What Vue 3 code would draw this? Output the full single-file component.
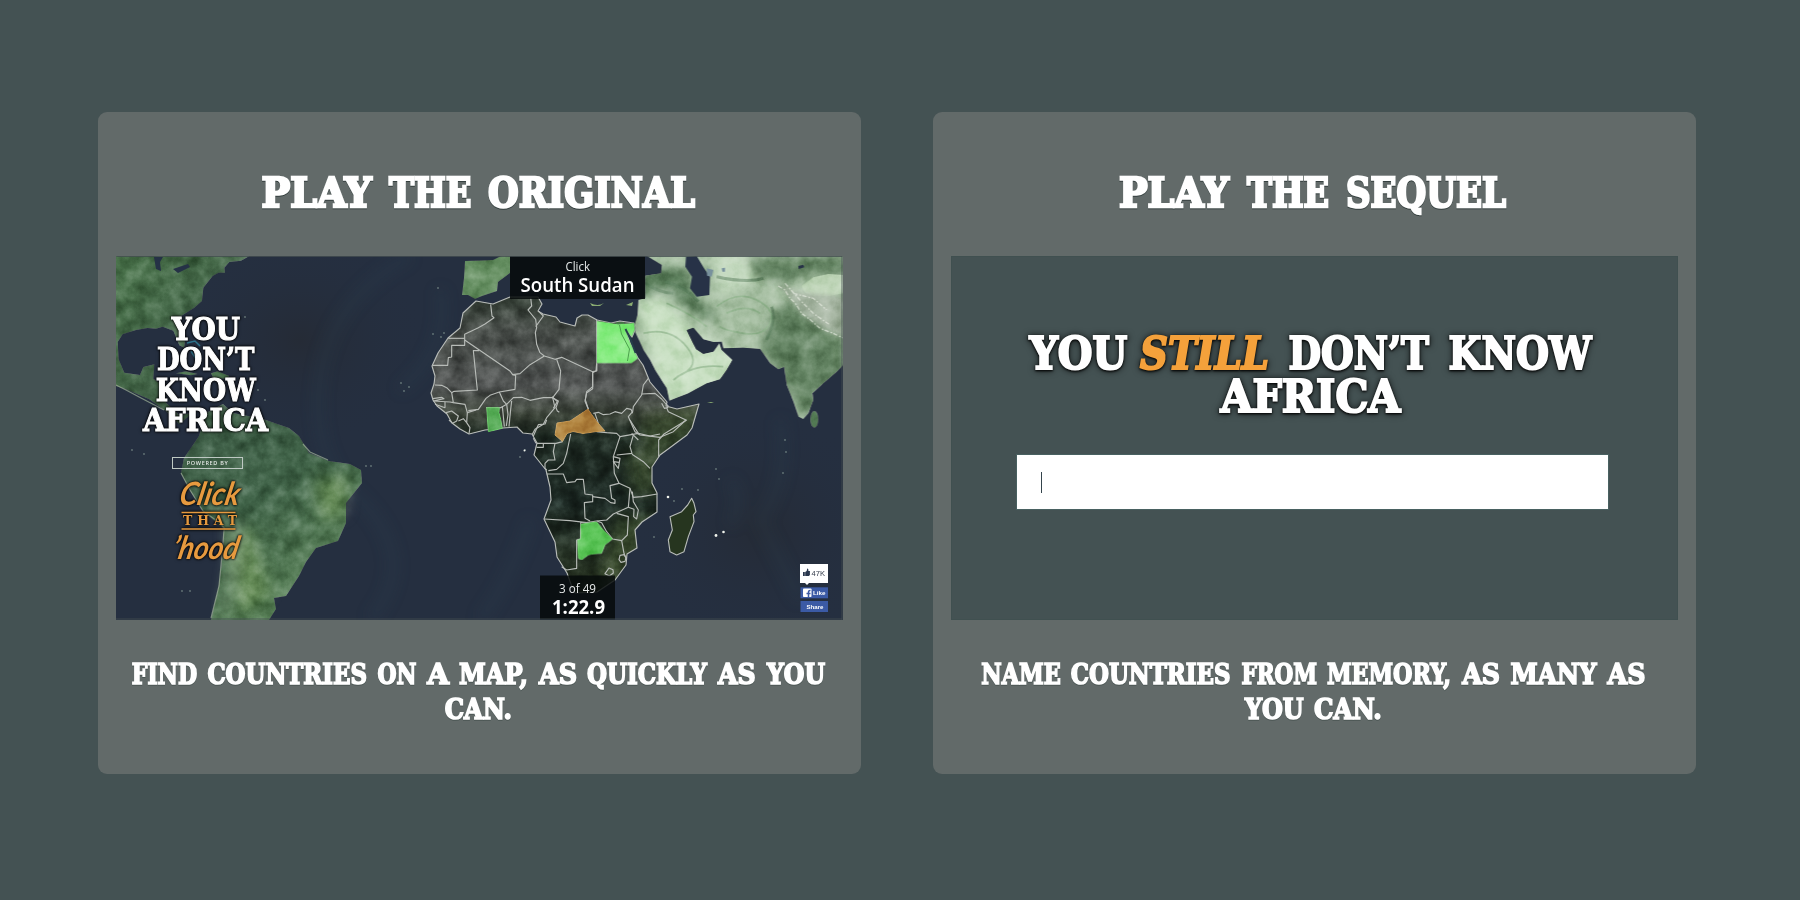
<script setup>
const cards = [
  {
    id: 'original',
    box: '116 112 727 144',
    foot: '116 620 727 154',
    title: [['PLAY', 261.6, 371.8], ['THE', 389, 471.5], ['ORIGINAL', 488, 695]],
    lines: [
      [['FIND', 131.8, 197], ['COUNTRIES', 207.4, 367], ['ON', 377.5, 416.4], ['A', 427.3, 449], ['MAP,', 459, 528], ['AS', 539, 577], ['QUICKLY', 587, 707], ['AS', 718, 755.6], ['YOU', 767, 825]],
      [['CAN.', 444.7, 512]],
    ],
  },
  {
    id: 'sequel',
    box: '951 112 727 144',
    foot: '951 620 727 154',
    title: [['PLAY', 1119, 1229], ['THE', 1247, 1329], ['SEQUEL', 1346, 1506]],
    lines: [
      [['NAME', 981.2, 1060.8], ['COUNTRIES', 1070.8, 1230.4], ['FROM', 1241.4, 1317], ['MEMORY,', 1327, 1451], ['AS', 1462.3, 1500], ['MANY', 1510.5, 1596.6], ['AS', 1607.6, 1645.4]],
      [['YOU', 1244.9, 1303.6], ['CAN.', 1314, 1381.7]],
    ],
  },
]
const captionWords = (c) => c.lines.flatMap((line, i) => line.map((w) => [...w, 683.5 + i * 35.5]))
const hero = [
  ['YOU', 1029.4, 1127.3, 369], ['STILL', 1140, 1269, 369], ['DON’T', 1288.6, 1429, 369],
  ['KNOW', 1448.6, 1591.4, 369], ['AFRICA', 1220.4, 1400.4, 411.5],
]
const logo = [
  ['YOU', 171.7, 240, 340], ['DON’T', 157, 254.5, 370.3],
  ['KNOW', 155.7, 255.7, 400.5], ['AFRICA', 143, 268, 430.5],
]
const africa = 'M476 301L463 313 460 328 448 338 438 353 432 366 435 376 434 384 431 393 433 400 437 406 447 414 452 423 460 429 469 434 485 430 503 428 517 427 523 433 532 434 537 443 534 455 546 470 550 487 551 500 544 519 555 542 557 557 567 573 572 587 575 593 597 592 615 580 626 565 627 554 637 548 635 530 642 522 657 512 657 493 652 483 652 467 660 455 687 435 692 428 699 404 677 409 666 406 667 402 650 382 643 365 638 358 630 343 625 328 632 337 635 330 634 323 620 321 611 323 597 320 588 315 582 315 577 318 575 326 560 322 556 317 543 314 538 311 542 304 538 297 510 297 493 304Z'
const west = [
  '362,145 366,180 372,185 345,204 325,215 284,235 284,268 245,268 245,303 235,305 233,328 187,328', '235,247 284,247',
  '284,252 350,297 420,345 428,356 450,353 480,326 523,300', '482,125 485,150 474,162 497,190 500,215 496,230 500,265 510,290 523,300', '497,212 507,198 520,180 505,165',
  '523,300 555,310 575,304 668,347 680,345 680,190', '328,284 310,284 322,402 252,406 245,410 230,395 215,388 195,387',
  '428,356 437,358 435,400 388,408 360,418 348,427 325,460 295,464', '388,408 400,435 410,445 430,425 455,424 480,433 520,425 548,425 567,400 572,345 560,310',
  '425,435 422,460 417,512', '668,347 668,398 650,410 645,435 655,460', '548,425 555,455 530,485 520,505 495,520 487,535',
  '548,425 565,435 558,455 562,465 568,469', '188,428 215,424 222,428 190,435 240,438 250,440 245,410', '195,445 225,455 225,438',
  '250,440 285,445 292,470 290,500 300,515 297,533', '228,470 245,465 265,480 260,495 248,502 237,492', '265,495 280,488 290,500', '292,470 318,462',
  '348,455 392,455 410,445', '397,450 403,512', '410,445 414,475 409,510', '680,345 680,322',
]
const east = [
  '200,340 198,362 188,368 188,410 170,425 166,450 175,477', '335,435 340,405 355,385', '335,435 310,470 308,485 295,500 315,545 330,555 390,562 430,545 468,510 415,485 410,473',
  '190,490 205,487 220,494 240,492 255,485 275,490 290,475 303,478 308,490', '195,490 205,520', '335,432 375,430 395,447 408,462 415,468', '395,460 403,475 415,472',
  '66,440 82,455 70,475', '305,550 325,570',
]
const south = [
  '350,70 408,70 428,65', '350,82 370,82 370,70', '405,70 400,95 405,120 385,120 375,130 375,145 380,150', '452,42 440,100 430,130 410,148 385,152',
  '380,162 430,162 440,188 465,185 470,178 490,178 495,222 518,225 518,245 493,248 495,295 510,303', '373,297 450,302 500,308 530,303 560,300 580,282 595,275 625,262',
  '600,50 590,80 580,110 583,160 597,190 570,197 575,235 585,240 585,250 572,248 555,235 518,230', '597,190 630,205 640,232 665,230 712,222', '630,205 625,262 642,268 641,290 650,297 655,270 640,245 637,215',
  '530,303 545,308 560,335 578,357 605,362 622,345 625,290 590,280', '605,362 612,400 620,420', '500,308 482,308 482,357 470,360 470,445 440,450 425,440',
  '640,45 630,80 636,100 590,105', '636,103 670,125 690,145', '530,35 560,38 590,40 600,50 655,40 690,48 720,42', '716,110 716,60 732,42 800,0', '580,110 600,115 595,145 580,125 597,127',
  '630,0 655,40', '380,0 375,12 355,14 340,48', '340,55 348,70',
]
const specks = [[132, 450], [144, 454], [438, 288], [433, 334], [441, 337], [444, 333], [401, 383], [409, 387], [404, 391], [525, 450], [520, 457], [668, 497], [674, 501], [682, 489], [698, 490], [654, 537], [716, 469], [719, 479], [785, 440], [786, 452], [783, 473], [366, 466], [371, 466], [182, 591], [190, 591], [265, 400], [258, 390], [245, 317]]
</script>

<template>
  <main class="page">
    <article v-for="c in cards" :key="c.id" class="card">
      <h2 class="title">
        <svg :viewBox="c.box" width="727" height="144">
          <text v-for="w in c.title" :key="w[1]" class="slab title-text" :x="w[1]" y="206.5" :textLength="w[2] - w[1]" lengthAdjust="spacingAndGlyphs">{{ w[0] }}</text>
        </svg>
      </h2>

      <div v-if="c.id === 'original'" class="media">
        <svg viewBox="116 256 727 364" width="727" height="364">
          <defs>
            <linearGradient id="sahara" x1="0" y1="0" x2="0" y2="1">
              <stop offset="0" stop-color="#39443a" /><stop offset=".12" stop-color="#4b504c" /><stop offset=".3" stop-color="#545756" />
              <stop offset=".4" stop-color="#3b4338" /><stop offset=".47" stop-color="#1f2b23" /><stop offset=".7" stop-color="#1b2722" /><stop offset="1" stop-color="#2b3724" />
            </linearGradient>
            <linearGradient id="namerica" x1="0" y1="0" x2="1" y2="1"><stop offset="0" stop-color="#4c754d" /><stop offset="1" stop-color="#3d5845" /></linearGradient>
            <linearGradient id="samerica" x1="0" y1="0" x2=".6" y2="1"><stop offset="0" stop-color="#41604a" /><stop offset=".5" stop-color="#416449" /><stop offset="1" stop-color="#5e865c" /></linearGradient>
            <radialGradient id="sea"><stop offset="0" stop-color="#252b36" /><stop offset="1" stop-color="#252f40" stop-opacity="0" /></radialGradient>
            <filter id="soft" x="-40%" y="-40%" width="180%" height="180%"><feGaussianBlur stdDeviation="7" /></filter>
            <filter id="wash" x="-40%" y="-40%" width="180%" height="180%"><feGaussianBlur stdDeviation="14" /></filter>
            <filter id="terrain" x="0" y="0" width="100%" height="100%" color-interpolation-filters="sRGB">
              <feTurbulence type="fractalNoise" baseFrequency=".06" numOctaves="5" seed="8" result="n" />
              <feColorMatrix in="n" type="matrix" values=".75 0 0 0 .115  .75 0 0 0 .115  .75 0 0 0 .115  0 0 0 0 1" result="g" />
              <feBlend in="g" in2="SourceGraphic" mode="soft-light" result="b" />
              <feComposite in="b" in2="SourceGraphic" operator="in" />
            </filter>
            <filter id="glow" x="-20%" y="-20%" width="140%" height="140%" color-interpolation-filters="sRGB"><feDropShadow dx="0" dy="0" stdDeviation=".8" flood-color="#000" /><feDropShadow dx="0" dy="0" stdDeviation="1.8" flood-color="#000" flood-opacity=".7" /></filter>
            <clipPath id="asiaClip"><path id="asiaShape" d="M350 18L395 45 393 70 345 77 345 145 325 150 322 195 313 225 315 245 340 300 360 330 375 360 410 415 418 452 475 430 530 400 570 388 590 360 607 330 575 300 568 280 550 305 520 312 498 298 480 262 470 240 490 233 520 268 550 276 575 275 580 295 640 293 690 297 720 340 745 358 762 350 770 405 790 455 805 500 820 507 835 490 850 450 847 430 880 400 920 365 940 345V18Z" /></clipPath>
            <clipPath id="africaClip"><path :d="africa" /></clipPath>
          </defs>
          <rect x="116" y="256" width="727" height="364" fill="#252f40" />
          <ellipse cx="300" cy="340" rx="130" ry="110" fill="url(#sea)" />
          <ellipse cx="760" cy="530" rx="130" ry="120" fill="url(#sea)" />
          <g fill="none" stroke="#2b3f50" stroke-width="8" filter="url(#soft)" opacity=".35">
            <path d="M410 256Q330 300 320 380T360 500Q420 560 370 620M530 520Q510 580 480 620M730 480Q745 500 730 525M780 420Q790 480 760 520L800 600M440 290Q450 350 400 390" />
          </g>

          <g filter="url(#terrain)">
            <g transform="translate(116 256) scale(.33333)">
              <path fill="url(#namerica)" d="M0 0H400L375 14 340 18 325 35 327 50 308 50 290 60 262 95 258 135 235 155 192 182 190 215 207 252 205 275 190 268 172 224 140 212 120 218 95 216 60 222 20 235 5 258 8 310 25 350 72 357 82 333 115 325 112 368 145 390 150 440 190 478 230 470 190 505 150 465 100 430 30 400 0 390Z" />
              <path fill="#4c7550" d="M180 352l30-6 35 8-20 4zM285 352l20-6 35 14-8 8-40-2z" />
            </g>
            <path fill="url(#samerica)" d="M206 413L223 404 233 413 263 419 289 428 299 436 309 453 329 461 350 464 361 470 362 483 346 503 346 523 338 541 316 548 306 562 299 576 286 596 274 598 276 609 269 620H211L219 586 223 553 224 529 203 511 190 490 181 473 184 458 199 436Z" />
            <path fill="#789e5f" opacity=".6" filter="url(#soft)" d="M315 480l33-5-2 40-25 5zM230 545l20-20 20 70-30 20z" />
            <path fill="#628c5e" d="M465 261l28-1 8-4h9v17l-12 9-1 9-15 5-7 3-7-4h-6l2-17z" />
            <g transform="translate(530 250) scale(.33333)">
              <use href="#asiaShape" fill="#a9c1a5" />
              <g clip-path="url(#asiaClip)">
                <path fill="#5b7f5c" filter="url(#wash)" d="M330 50L470 60 500 150 570 200 530 210 400 120 330 150z" />
                <path fill="#c9e0c3" filter="url(#wash)" d="M320 150L400 145 500 250 640 325 560 420 400 460z" />
                <path fill="#c2d8bd" filter="url(#wash)" d="M540 10H700L690 90 570 140z" />
                <path fill="#668665" filter="url(#wash)" d="M650 18H950V80L820 70 780 100 680 80zM690 290L730 190 770 150 940 270V370L830 515 740 370z" />
                <path fill="#bcd3b5" d="M815 108L850 82 895 72 940 75V130L900 138 850 138 825 128z" />
                <path fill="#a9b8a5" filter="url(#soft)" d="M745 100L800 125 940 140V262L870 232 815 190 780 145z" />
                <path fill="none" stroke="#e3e8de" stroke-width="4" stroke-dasharray="13 6 5 4" d="M745 108L765 120 780 145 795 158 815 190 842 210 870 235 900 246 940 264M765 100L810 150 850 190 900 225M790 130L850 145 890 180" opacity=".75" />
                <path fill="none" stroke="#8ab087" stroke-width="5" opacity=".65" d="M340 250Q420 230 470 290T440 380M560 170Q620 120 680 150T720 220 640 250 570 230M590 190Q650 160 690 190M410 160Q480 190 530 230M430 390Q490 340 580 350" />
                <path fill="none" stroke="#4d7351" stroke-width="9" opacity=".5" d="M405 95Q470 110 505 155M345 100Q390 130 430 130M560 80Q650 100 700 85M710 270Q740 210 725 170" />
              </g>
              <ellipse cx="853" cy="508" rx="12" ry="25" fill="#547b55" />
            </g>
            <path :d="africa" fill="url(#sahara)" />
            <g clip-path="url(#africaClip)"><path fill="#4c6139" opacity=".55" filter="url(#soft)" d="M640 418l60-14-8 35-45 25zM625 450l35 0 0 45-28 0zM618 515h40l-20 55-40 15z" /></g>
          </g>
          <path fill="#a4bea0" opacity=".55" filter="url(#soft)" d="M227 522l15 2 0 35-15 55-7 0 8-45z" />
          <path fill="none" stroke="#9fb399" stroke-width="1.2" opacity=".7" d="M181 473l9 17 13 21 17 12 5 6M224 530l-2 25-3 31-8 32M303 444l7 8 18 8M116 385l10 5 15 8 23 12" />
          <g transform="translate(530 250) scale(.33333)">
            <path fill="#273247" d="M468 20L500 18 522 55 540 80 538 135 500 140 480 115 486 80 466 50ZM805 48l15-4 3 8-17 5z" />
            <path fill="#78919d" d="M530 55l20 5-5 20-14-3zM575 55l10-2v12h-8z" />
          </g>
          <path fill="#253146" d="M154 257l9 0-3 5 1 9-5-2zM173 269l15-5 2 3-12 6z" />
          <g fill="#9bb0a5"><circle v-for="s in specks" :key="s[0] + '-' + s[1]" :cx="s[0]" :cy="s[1]" r=".9" opacity=".55" /></g>
          <path fill="#8bad72" d="M590 303q8 4 14 0l-4 3h-8zM626 305l7-3-1 4zM707 402h7l-3 1z" />
          <g fill="#f1f4ed"><circle cx="716" cy="535.5" r="1.4" /><circle cx="723.5" cy="532" r="1.3" /><circle cx="524.5" cy="450.5" r="1" /><circle cx="668" cy="497" r="1.3" /></g>
          <path fill="none" stroke="#3187a0" stroke-width="1.5" opacity=".8" d="M187 343l8-2 5 5M191 351l5 8M199 350l1 9" />

          <g fill="none" stroke="#b8bcb8" stroke-width="1.15" stroke-linejoin="round">
            <path :d="africa" />
            <g stroke-width="3.4"><g transform="translate(370 256) scale(.33333)"><polyline v-for="p in west" :key="p" :points="p" /></g>
              <g transform="translate(530 250) scale(.33333)"><polyline v-for="p in east" :key="p" :points="p" /></g>
              <g transform="translate(420 420) scale(.33333)">
                <polyline v-for="p in south" :key="p" :points="p" />
                <path d="M600 406l12-2 6 9-3 11-12 3-6-8zM567 444l12 5 1 10-12 9-13-7z" />
                <path fill="#26351f" d="M815 235L822 250 828 275 820 285 822 305 805 350 792 395 770 405 750 395 745 360 757 330 750 290 785 275 803 255Z" />
              </g>
            </g>
          </g>
          <g filter="url(#terrain)">
            <path transform="translate(370 256) scale(.33333)" fill="#50a750" stroke="#69ce68" stroke-width="3" d="M350 455L388 455 387 470 392 490 397 517 355 527Z" />
            <path fill="#b28540" stroke="#cb9b51" d="M557 423L570 421 582 413 588 409 592 415 598 423 605 431 597 431.500 583 433.500 573 431.500 567 433.500 562.500 441.500 555 435Z" />
            <path transform="translate(530 250) scale(.33333)" fill="#86ec80" d="M200 212L265 222 313 218 315 240 305 262 285 235 302 280 325 325 305 340 200 340Z" />
            <path transform="translate(420 420) scale(.33333)" fill="#5fc75b" stroke="#7ce477" stroke-width="3" d="M482 312L530 305 550 330 578 357 555 375 545 400 520 402 505 405 485 420 475 415 472 360 482 357Z" />
          </g>
          <path fill="none" stroke="#4c9f4d" stroke-width="1" d="M616 323h8M619.500 325l2 9 8 15-2 12" />
          <path fill="none" stroke="#24404a" stroke-width="1.800" d="M625.500 329l5 10 5 14" />

          <rect x="510" y="256" width="135" height="43" class="hud" />
          <rect x="540" y="575.5" width="75" height="44" class="hud" />
          <g class="hud-text">
            <text x="565.5" y="271" font-size="12.500" textLength="24.500" lengthAdjust="spacingAndGlyphs">Click</text>
            <text x="520.5" y="291.700" font-size="20" class="strong" textLength="114" lengthAdjust="spacingAndGlyphs">South Sudan</text>
            <text x="559" y="592.700" font-size="12.500" textLength="37" lengthAdjust="spacingAndGlyphs">3 of 49</text>
            <text x="552" y="614" font-size="19.500" class="bold" textLength="53" lengthAdjust="spacingAndGlyphs">1:22.9</text>
          </g>

          <g filter="url(#glow)">
            <text v-for="w in logo" :key="w[0]" class="slab logo-text" :x="w[1]" :y="w[3]" :textLength="w[2] - w[1]" lengthAdjust="spacingAndGlyphs">{{ w[0] }}</text>
          </g>
          <rect x="172.500" y="457.500" width="70" height="11" fill="none" stroke="#bec9c3" />
          <text x="186.700" y="465.300" class="powered" textLength="41" lengthAdjust="spacing">POWERED BY</text>
          <g class="hood" filter="url(#glow)">
            <text class="script" transform="translate(178 504.500) skewX(-12)" textLength="60" lengthAdjust="spacingAndGlyphs">Click</text>
            <path d="M181.500 512.500h54M181.500 529h54" stroke="#e79a3f" stroke-width="1.700" />
            <text x="183" y="525.300" class="that" textLength="54">THAT</text>
            <text class="script" transform="translate(171 558.500) skewX(-12)" textLength="66" lengthAdjust="spacingAndGlyphs">’hood</text>
          </g>

          <path fill="#fff" d="M800 564h28v19h-19l-2 2-2-2h-5z" />
          <path fill="#29364d" d="M803 572h1.800v4h-1.800zM805.200 572l1.500-1 .5-2.500q1.500-.3 1.200 2.500h1.500v4l-1 1h-3.700z" />
          <text x="811.5" y="575.5" class="social count" textLength="13.500" lengthAdjust="spacingAndGlyphs">47K</text>
          <rect x="800.500" y="587.300" width="27.500" height="11" fill="#3b5aa5" />
          <rect x="803" y="588.500" width="8.500" height="8.500" rx=".8" fill="#fff" />
          <path fill="none" stroke="#3b5aa5" stroke-width="1.500" d="M808.500 597v-5q0-1.700 2-1.500M806.500 593.500h4" />
          <text x="813" y="594.700" class="social" textLength="12.500" lengthAdjust="spacingAndGlyphs">Like</text>
          <rect x="800.500" y="601" width="27.500" height="11" fill="#3b5aa5" />
          <text x="806.500" y="608.700" class="social" textLength="17" lengthAdjust="spacingAndGlyphs">Share</text>
          <path d="M116.500 256.500h726M842 256v364M116 619h726" stroke="#444d50" fill="none" opacity=".8" />
        </svg>
      </div>

      <div v-else class="media sequel">
        <svg class="hero" viewBox="951 256 727 199" width="727" height="199">
          <text v-for="w in hero" :key="w[0]" class="slab hero-text" :class="{ still: w[0] === 'STILL' }" :x="w[1]" :y="w[3]" :textLength="w[2] - w[1]" lengthAdjust="spacingAndGlyphs">{{ w[0] }}</text>
        </svg>
        <div class="answer"><i class="caret"></i></div>
      </div>

      <p class="caption">
        <svg :viewBox="c.foot" width="727" height="154">
          <text v-for="w in captionWords(c)" :key="w[1]" class="slab caption-text" :x="w[1]" :y="w[3]" :textLength="w[2] - w[1]" lengthAdjust="spacingAndGlyphs">{{ w[0] }}</text>
        </svg>
      </p>
    </article>
  </main>
</template>

<style>
body { margin: 0; background: #445253; }
</style>

<style scoped>
.page { box-sizing: border-box; width: 1800px; height: 900px; padding: 112px 0 0 98px; display: flex; gap: 72px; background: #445253; overflow: hidden; }
.card { box-sizing: border-box; width: 763px; height: 662px; padding: 0 18px; border-radius: 9px; background: #626a69; overflow: hidden; }
.title, .caption { margin: 0; }
.title { height: 144px; }
.caption { height: 154px; }
svg { display: block; }
.media { width: 727px; height: 363.5px; margin-bottom: .5px; overflow: hidden; }
.slab { font-family: "DejaVu Serif", serif; font-weight: bold; fill: #fff; stroke: #fff; stroke-linejoin: miter; }
.title-text { font-size: 40.5px; stroke-width: 2.6px; filter: drop-shadow(0 1px 0 #35403f); }
.caption-text { font-size: 27px; stroke-width: 1.7px; filter: drop-shadow(0 1px 0 #4b5654); }
.logo-text { font-size: 31px; stroke-width: 1.1px; }
.hero-text { font-size: 44px; stroke-width: 2.2px; filter: drop-shadow(0 1px 1px #000) drop-shadow(0 0 3px rgba(0, 0, 0, .65)); }
.still { fill: #f4a13b; stroke: #f4a13b; font-style: italic; }
.hud { fill: #05090a; fill-opacity: .84; }
.hud-text { font-family: "Open Sans", "Noto Sans", sans-serif; fill: #e7eaea; }
.hud-text .strong { font-weight: 600; fill: #fff; }
.hud-text .bold { font-weight: 700; fill: #fff; }
.powered { font: 600 5.500px "Open Sans", sans-serif; fill: #e3e7e4; }
.hood { fill: #e79a3f; }
.script { font: italic 700 32px Lato, sans-serif; }
.that { font: bold 12.500px "DejaVu Serif", serif; }
.social { font: bold 6px "Liberation Sans", sans-serif; fill: #fff; }
.count { font-size: 7.500px; font-weight: normal; fill: #343c4b; }
.sequel { background: #445253; box-shadow: inset 0 0 0 1px #405050; }
.answer { box-sizing: border-box; width: 591px; height: 54px; margin-left: 66px; padding: 17px 24px; background: #fff; box-shadow: 0 0 0 1px #496161; }
.caret { display: block; width: 1px; height: 21px; background: #34444c; }
</style>
